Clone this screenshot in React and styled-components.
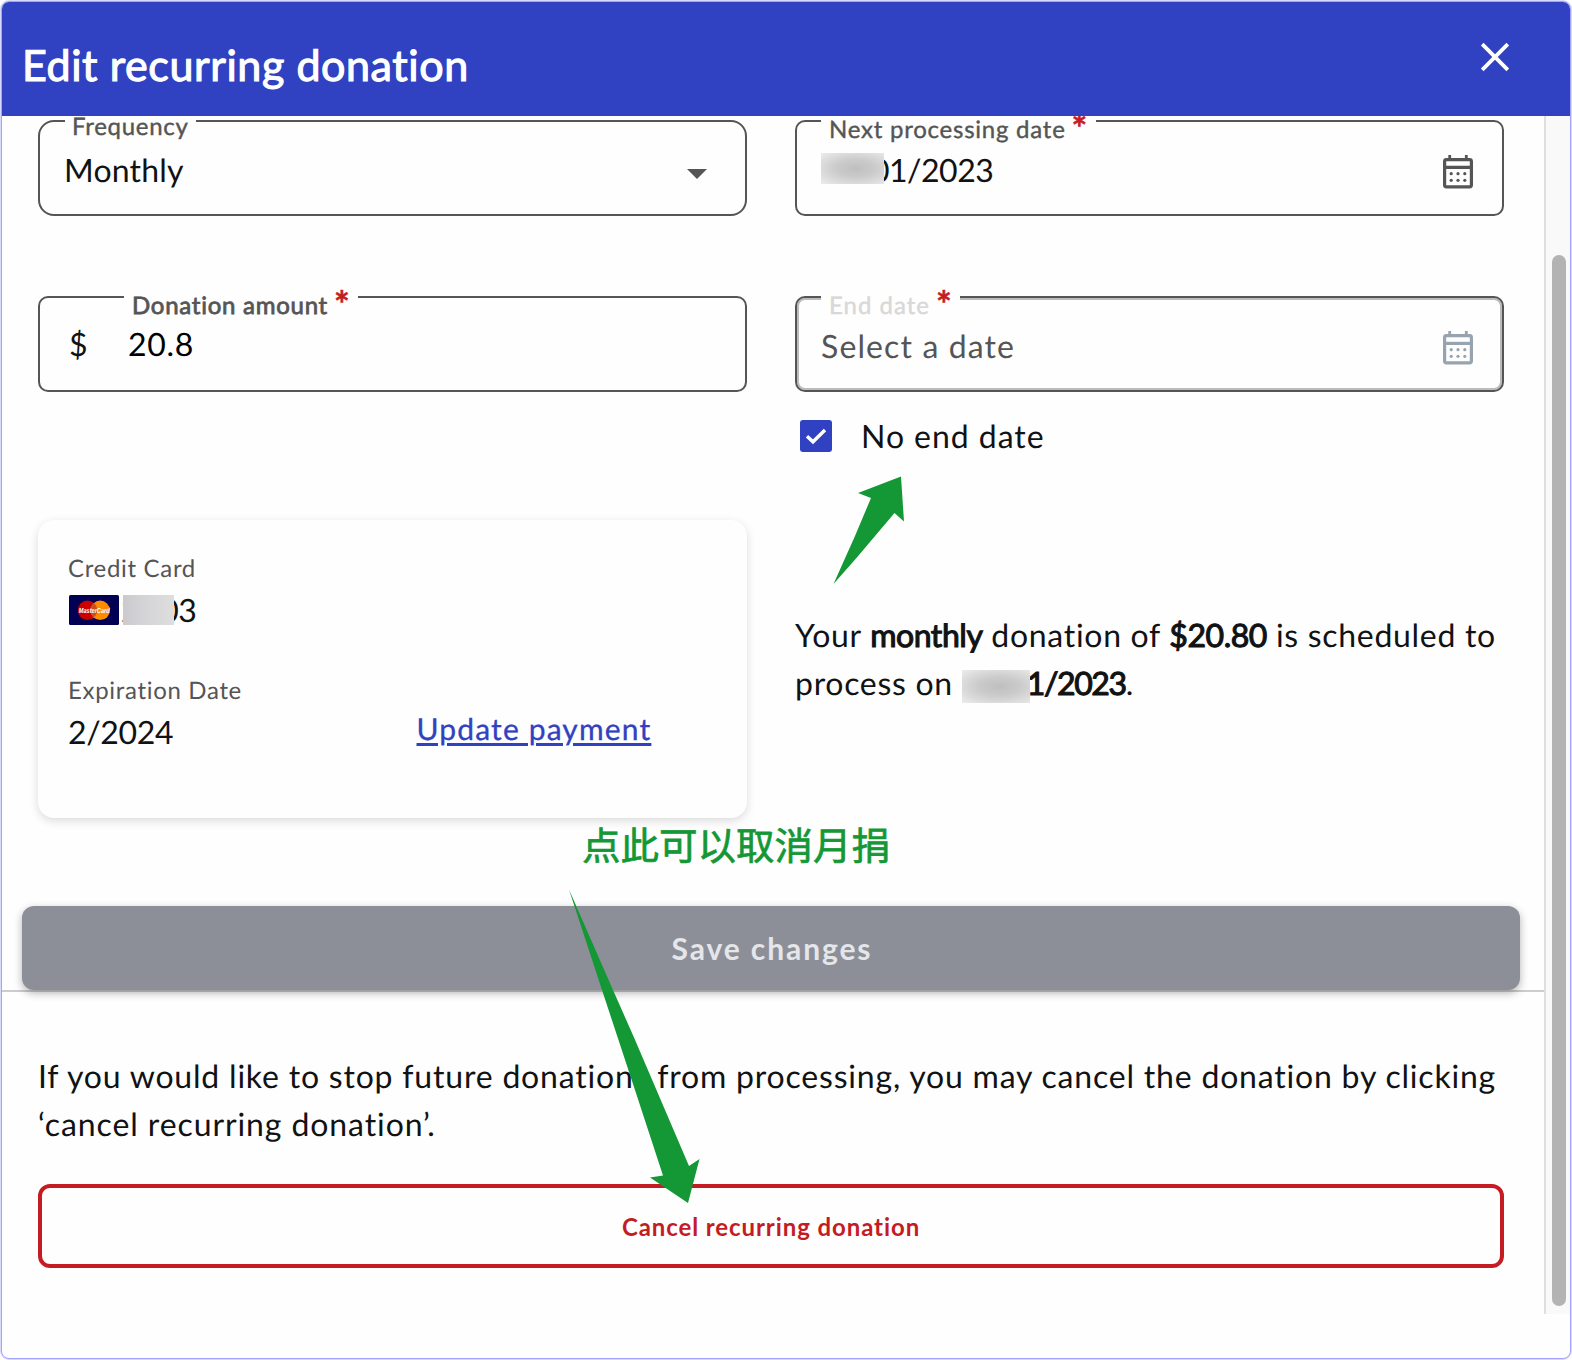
import React from "react";
import styled, { createGlobalStyle } from "styled-components";

const GlobalStyle = createGlobalStyle`
  *, *::before, *::after { box-sizing: border-box; }
  html, body { margin: 0; padding: 0; background: #fff; }
  body {
    font-family: Lato, "Noto Sans CJK SC", sans-serif;
    color: #111213;
    text-rendering: geometricPrecision;
    font-variant-ligatures: none;
  }
  button { font-family: inherit; cursor: pointer; }
`;

const Dialog = styled.div`
  position: relative;
  width: 1572px;
  height: 1360px;
  padding: 1px;
  border-radius: 9px;
  background: #d9d9fc;
  overflow: hidden;
`;

const Surface = styled.section`
  display: flex;
  flex-direction: column;
  height: 100%;
  border: 1px solid #a3a3ff;
  border-radius: 8px;
  background: #fefefe;
  overflow: hidden;
`;

const Header = styled.header`
  flex: none;
  display: flex;
  justify-content: space-between;
  align-items: flex-start;
  height: 114px;
  padding: 37px 59px 0 20px;
  background: #3042c1;
`;

const Title = styled.h1`
  margin: 0;
  font-size: 43px;
  line-height: 53px;
  font-weight: 400;
  letter-spacing: 0.58px;
  color: #fff;
  -webkit-text-stroke: 1.1px #fff;
`;

const CloseButton = styled.button`
  display: flex;
  margin: 2px 0 0;
  padding: 0;
  border: 0;
  background: none;
`;

const Body = styled.div`
  display: flex;
  height: 1198px;
  overflow: hidden;
`;

const Content = styled.main`
  flex: 1;
  overflow: hidden;
`;

const ScrollTrack = styled.div`
  flex: none;
  display: flex;
  justify-content: center;
  width: 26px;
  padding: 139px 0 8px 2px;
  border-left: 2px solid #dfdfdf;
  background: #f9f9f9;
`;

const ScrollThumb = styled.div`
  width: 14px;
  height: 100%;
  border-radius: 7px;
  background: #b3b3b3;
`;

const Form = styled.div`
  display: grid;
  grid-template-columns: 709px 709px;
  grid-template-rows: 96px 156px 298px;
  column-gap: 48px;
  row-gap: ${(p) => p.$rowGap || 0}px;
  padding: 4px 36px 0;
`;

const PaymentRow = styled.div`
  display: grid;
  grid-template-columns: 709px 709px;
  column-gap: 48px;
  height: 298px;
  margin-top: 68px;
  padding: 0 36px;
`;

const FieldGrid = styled(Form)`
  grid-template-rows: 96px 156px;
`;

const Cell = styled.div`
  min-width: 0;
`;

const Field = styled.div`
  position: relative;
  display: flex;
  align-items: flex-start;
  height: 96px;
  padding: ${(p) => p.$pad};
  border: 2px solid #555;
  border-radius: ${(p) => p.$radius || 10}px;
  box-shadow: ${(p) => (p.$disabled ? "inset 0 0 0 2px #bbb" : "none")};
`;

const FieldLabel = styled.label`
  position: absolute;
  top: ${(p) => p.$top}px;
  left: ${(p) => p.$left}px;
  display: flex;
  align-items: flex-start;
  width: ${(p) => p.$width}px;
  height: 30px;
  padding-left: ${(p) => p.$inset || 8}px;
  background: #fefefe;
  font-size: 24px;
  line-height: 30px;
  letter-spacing: ${(p) => p.$track}px;
  white-space: nowrap;
  color: ${(p) => (p.$disabled ? "#d8d8d8" : "#555")};
  -webkit-text-stroke: ${(p) => p.$stroke || 0.4}px;
`;

const Required = styled.span`
  margin: -2px 0 0 6px;
  font-size: 37px;
  line-height: 30px;
  font-weight: 700;
  letter-spacing: 0;
  color: #c51c24;
  -webkit-text-stroke: 0.5px;
`;

const Value = styled.span`
  flex: 1;
  font-size: 32px;
  line-height: 40px;
  letter-spacing: ${(p) => p.$track}px;
  color: ${(p) => p.$color || "#111213"};
  white-space: nowrap;
`;

const Prefix = styled.span`
  width: 59px;
  font-size: 32px;
  line-height: 40px;
`;

const Smudge = styled.i`
  position: relative;
  display: inline-block;
  vertical-align: ${(p) => p.$drop}px;
  width: ${(p) => p.$width}px;
  height: ${(p) => p.$height}px;
  margin: 0 ${(p) => p.$overlap}px 0 ${(p) => p.$before || 0}px;
  background: ${(p) =>
    p.$flat
      ? "linear-gradient(90deg, #cbc9cd, #d6d6d8 50%, #dedede)"
      : "radial-gradient(ellipse at 55% 50%, #bfbfbf 0%, #cbcbcb 40%, #dedede 75%, #ededed 100%)"};
`;

const CheckRow = styled.label`
  display: flex;
  align-items: center;
  gap: 29px;
  height: 32px;
  margin: 28px 0 0 5px;
  font-size: 32px;
  line-height: 32px;
  letter-spacing: 0.95px;
`;

const CheckBox = styled.span`
  display: flex;
  width: 32px;
  height: 32px;
  border-radius: 3px;
  background: #3042c1;
`;

const PaymentCard = styled.article`
  height: 298px;
  padding: 34px 30px 0 30px;
  border-radius: 16px;
  background: #fefefe;
  box-shadow: 0 3px 10px rgba(0, 0, 0, 0.14);
`;

const Caption = styled.div`
  margin-top: ${(p) => p.$gap || 0}px;
  font-size: 24px;
  line-height: 30px;
  letter-spacing: 0.68px;
  color: #555;
`;

const CardNumber = styled.div`
  display: flex;
  align-items: center;
  height: 36px;
  margin: 8px 0 0 1px;
  font-size: 32px;
  line-height: 36px;
  letter-spacing: -0.4px;
`;

const CardDigits = styled.span`
  display: flex;
  align-items: center;
  margin-left: 2px;
`;

const ExpiryRow = styled.div`
  display: flex;
  align-items: flex-start;
  margin-top: 8px;
  font-size: 32px;
  line-height: 36px;
  letter-spacing: -0.34px;
`;

const Expiry = styled.span`
  width: 348.5px;
`;

const TextLink = styled.a`
  margin-top: -3px;
  font-size: 30px;
  letter-spacing: 1.15px;
  color: #3042c1;
  -webkit-text-stroke: 0.3px;
  text-decoration: underline;
  text-decoration-thickness: 3px;
  text-underline-offset: 3px;
`;

const Summary = styled.p`
  margin: 91px -10px 0 0;
  font-size: 32px;
  line-height: 48px;
  letter-spacing: 0.7px;
  white-space: nowrap;
`;

const Strong = styled.b`
  font-weight: 400;
  letter-spacing: ${(p) => p.$track || -0.45}px;
  -webkit-text-stroke: 1.1px;
`;

const SaveBar = styled.div`
  margin-top: 88px;
  padding: 0 24px 0 20px;
  border-bottom: 2px solid #ccc;
`;

const SaveButton = styled.button`
  display: block;
  width: 100%;
  height: 84px;
  padding: 0 0 0 2px;
  border: 0;
  border-radius: 12px;
  background: #8c8f98;
  box-shadow: 0 3px 8px rgba(0, 0, 0, 0.3);
  font-size: 30px;
  font-weight: 700;
  letter-spacing: 1.9px;
  color: #e4e6e9;
`;

const CancelSection = styled.div`
  display: flex;
  flex-direction: column;
  gap: 36px;
  padding: 60px 40px 0 36px;
`;

const Note = styled.p`
  margin: 0;
  font-size: 32px;
  line-height: 48px;
  letter-spacing: ${(p) => p.$track || 0.8}px;
  white-space: nowrap;
`;

const CancelButton = styled.button`
  height: 84px;
  border: 4px solid #c51c24;
  border-radius: 12px;
  background: none;
  font-size: 24px;
  font-weight: 700;
  letter-spacing: 0.91px;
  color: #c51c24;
`;

const Annotations = styled.svg`
  position: absolute;
  inset: 0;
  pointer-events: none;
`;

const AnnotationText = styled.div`
  position: absolute;
  left: 582px;
  top: 819px;
  font-family: "Noto Sans CJK SC", sans-serif;
  font-size: 38.5px;
  line-height: 50px;
  color: #149735;
  -webkit-text-stroke: 0.7px;
  white-space: nowrap;
`;

const IconSlot = styled.span`
  flex: none;
  display: flex;
  margin-top: ${(p) => p.$top || 0}px;
`;

function CalendarIcon({ color }) {
  return (
    <svg width="30" height="34" viewBox="0 0 30 34" fill="none">
      <path d="M6.7 0v5M23.3 0v5" stroke={color} strokeWidth="2.8" />
      <rect x="1.6" y="4.6" width="26.8" height="27.3" rx="1.8" stroke={color} strokeWidth="3.2" />
      <path d="M2 12.4h26" stroke={color} strokeWidth="3.2" />
      {[18.7, 25.3].map((y) =>
        [8.2, 15, 21.8].map((x) => <circle key={`${x}-${y}`} cx={x} cy={y} r="1.6" fill={color} />)
      )}
    </svg>
  );
}

function MasterCardIcon() {
  return (
    <svg width="50" height="30" viewBox="0 0 50 30">
      <rect width="50" height="30" rx="1.5" fill="#010052" />
      <circle cx="18.5" cy="15.3" r="9.7" fill="#c00" />
      <circle cx="31.2" cy="15.3" r="9.7" fill="#ff8c00" />
      <path d="M24.85 8a9.7 9.7 0 0 1 0 14.6a9.7 9.7 0 0 1 0-14.6z" fill="#c8501c" />
      <text
        x="25.2"
        y="18"
        textAnchor="middle"
        textLength="31"
        lengthAdjust="spacingAndGlyphs"
        fontFamily="Liberation Sans, sans-serif"
        fontSize="7.2"
        fontWeight="700"
        fontStyle="italic"
        letterSpacing="0"
        fill="#fff"
      >
        MasterCard
      </text>
    </svg>
  );
}

export default function App() {
  return (
    <>
      <GlobalStyle />
      <Dialog>
        <Surface>
          <Header>
            <Title>Edit recurring donation</Title>
            <CloseButton aria-label="Close">
              <svg width="32" height="32" viewBox="0 0 32 32">
                <path d="M3.2 3.2l25.6 25.6M28.8 3.2L3.2 28.8" stroke="#fff" strokeWidth="3.8" />
              </svg>
            </CloseButton>
          </Header>
          <Body>
            <Content>
              <FieldGrid $rowGap={80}>
                <Cell>
                  <Field $radius={16} $pad="28px 38px 0 24px">
                    <FieldLabel $top={-10} $left={25} $width={131} $track={0.7} $inset={7}>
                      Frequency
                    </FieldLabel>
                    <Value $track={0.19}>Monthly</Value>
                    <IconSlot $top={19}>
                      <svg width="20" height="10" viewBox="0 0 20 10">
                        <path d="M0 0h20L10 10z" fill="#555" />
                      </svg>
                    </IconSlot>
                  </Field>
                </Cell>
                <Cell>
                  <Field $pad="28px 29px 0 24px">
                    <FieldLabel $top={-7} $left={24} $width={275} $track={0.76}>
                      Next processing date<Required>*</Required>
                    </FieldLabel>
                    <Value $track={-0.5}>
                      <Smudge $width={63} $height={31} $drop={-2} $overlap={-27} />
                      /01/2023
                    </Value>
                    <IconSlot $top={5}>
                      <CalendarIcon color="#555" />
                    </IconSlot>
                  </Field>
                </Cell>
                <Cell>
                  <Field $pad="26px 20px 0 29px">
                    <FieldLabel $top={-7} $left={84} $width={234} $track={0.74} $stroke={0.8}>
                      Donation amount<Required>*</Required>
                    </FieldLabel>
                    <Prefix>$</Prefix>
                    <Value $track={0.7} $color="#000">
                      20.8
                    </Value>
                  </Field>
                </Cell>
                <Cell>
                  <Field $pad="28px 29px 0 24px" $disabled>
                    <FieldLabel $top={-7} $left={24} $width={139} $track={1} $disabled>
                      End date<Required>*</Required>
                    </FieldLabel>
                    <Value $track={1.12} $color="#555">
                      Select a date
                    </Value>
                    <IconSlot $top={5}>
                      <CalendarIcon color="#98a3b0" />
                    </IconSlot>
                  </Field>
                  <CheckRow>
                    <CheckBox>
                      <svg width="32" height="32" viewBox="0 0 32 32" fill="none">
                        <path d="M7 16.2l6 5.6L25 10" stroke="#fff" strokeWidth="3.4" />
                      </svg>
                    </CheckBox>
                    No end date
                  </CheckRow>
                </Cell>
              </FieldGrid>
              <PaymentRow>
                <PaymentCard>
                  <Caption>Credit Card</Caption>
                  <CardNumber>
                    <MasterCardIcon />
                    <CardDigits>
                      2
                      <Smudge $flat $width={51} $height={30} $before={-16} $overlap={-14} />
                      03
                    </CardDigits>
                  </CardNumber>
                  <Caption $gap={48}>Expiration Date</Caption>
                  <ExpiryRow>
                    <Expiry>2/2024</Expiry>
                    <TextLink>Update payment</TextLink>
                  </ExpiryRow>
                </PaymentCard>
                <Summary>
                  Your <Strong>monthly</Strong> donation of <Strong>$20.80</Strong> is scheduled to
                  <br />
                  process on <Smudge $width={68} $height={33} $drop={-8} $overlap={-3} />
                  <Strong $track={-1.4}>1/2023</Strong>.
                </Summary>
              </PaymentRow>
              <SaveBar>
                <SaveButton>Save changes</SaveButton>
              </SaveBar>
              <CancelSection>
                <div>
                  <Note>
                    If you would like to stop future donations from processing, you may cancel the donation by clicking
                  </Note>
                  <Note $track={0.9}>‘cancel recurring donation’.</Note>
                </div>
                <CancelButton>Cancel recurring donation</CancelButton>
              </CancelSection>
            </Content>
            <ScrollTrack>
              <ScrollThumb />
            </ScrollTrack>
          </Body>
        </Surface>
        <AnnotationText>点此可以取消月捐</AnnotationText>
        <Annotations width="1572" height="1360" viewBox="0 0 1572 1360">
          <path d="M901 476.5L858 493L871 498L855 536L833.500 584L856 558.500L894.500 513L904 521.500z" fill="#149735" />
          <path
            d="M569 889.500L602 990L634 1087L663 1175.500L650 1177.500L688 1203L699.500 1159L689 1166L634 1037.500L613 990z"
            fill="#149735"
          />
        </Annotations>
      </Dialog>
    </>
  );
}
